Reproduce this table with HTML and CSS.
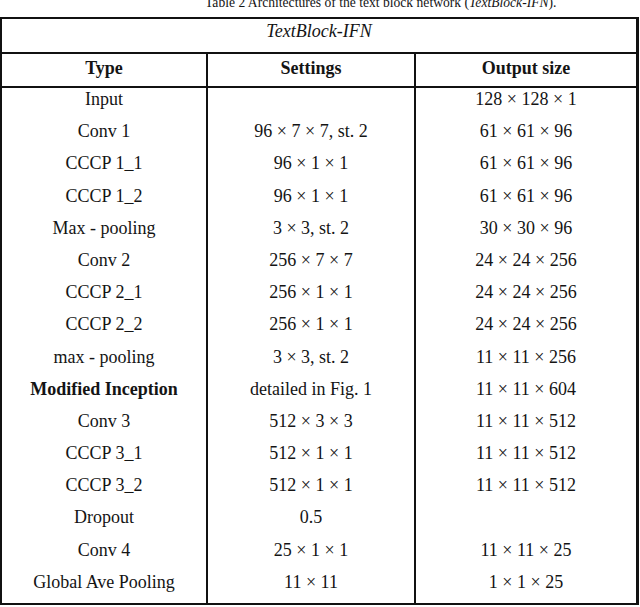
FILE: index.html
```html
<!DOCTYPE html>
<html lang="en">
<head>
<meta charset="utf-8">
<title>TextBlock-IFN</title>
<link rel="stylesheet" href="styles.css">
</head>
<body>
<div class="caption-clip">
  <p class="caption">Table 2 Architectures of the text block network (<i>TextBlock-IFN</i>).</p>
</div>
<table class="arch">
  <colgroup>
    <col class="c1"><col class="c2"><col class="c3">
  </colgroup>
  <thead>
    <tr class="title-row"><th colspan="3" class="title">TextBlock-IFN</th></tr>
    <tr class="head-row">
      <th>Type</th>
      <th class="div">Settings</th>
      <th class="div">Output size</th>
    </tr>
  </thead>
  <tbody>
    <tr><td>Input</td><td class="div"></td><td class="div">128 × 128 × 1</td></tr>
    <tr><td>Conv 1</td><td class="div">96 × 7 × 7, st. 2</td><td class="div">61 × 61 × 96</td></tr>
    <tr><td>CCCP 1_1</td><td class="div">96 × 1 × 1</td><td class="div">61 × 61 × 96</td></tr>
    <tr><td>CCCP 1_2</td><td class="div">96 × 1 × 1</td><td class="div">61 × 61 × 96</td></tr>
    <tr><td>Max - pooling</td><td class="div">3 × 3, st. 2</td><td class="div">30 × 30 × 96</td></tr>
    <tr><td>Conv 2</td><td class="div">256 × 7 × 7</td><td class="div">24 × 24 × 256</td></tr>
    <tr><td>CCCP 2_1</td><td class="div">256 × 1 × 1</td><td class="div">24 × 24 × 256</td></tr>
    <tr><td>CCCP 2_2</td><td class="div">256 × 1 × 1</td><td class="div">24 × 24 × 256</td></tr>
    <tr><td>max - pooling</td><td class="div">3 × 3, st. 2</td><td class="div">11 × 11 × 256</td></tr>
    <tr><td class="strong">Modified Inception</td><td class="div">detailed in Fig. 1</td><td class="div">11 × 11 × 604</td></tr>
    <tr><td>Conv 3</td><td class="div">512 × 3 × 3</td><td class="div">11 × 11 × 512</td></tr>
    <tr><td>CCCP 3_1</td><td class="div">512 × 1 × 1</td><td class="div">11 × 11 × 512</td></tr>
    <tr><td>CCCP 3_2</td><td class="div">512 × 1 × 1</td><td class="div">11 × 11 × 512</td></tr>
    <tr><td>Dropout</td><td class="div">0.5</td><td class="div"></td></tr>
    <tr><td>Conv 4</td><td class="div">25 × 1 × 1</td><td class="div">11 × 11 × 25</td></tr>
    <tr><td>Global Ave Pooling</td><td class="div">11 × 11</td><td class="div">1 × 1 × 25</td></tr>
  </tbody>
</table>
</body>
</html>
```
FILE: styles.css
```css
html, body {
  margin: 0;
  padding: 0;
  background: #ffffff;
}

body {
  font-family: "Liberation Serif", "Times New Roman", serif;
  color: #141414;
}

.caption-clip {
  height: 17px;
  overflow: hidden;
}

.caption {
  margin: -6px 0 0 0;
  padding-left: 205px;
  font-size: 13.6px;
  line-height: 18px;
  white-space: nowrap;
}

.arch {
  border-collapse: separate;
  border-spacing: 0;
  table-layout: fixed;
  width: 639px;
  border-top: 2px solid #111;
  border-left: 2px solid #111;
  border-right: 3px solid #111;
  border-bottom: 2px solid #111;
  font-size: 18px;
}

.c1 { width: 204px; }
.c2 { width: 208px; }
.c3 { width: 222px; }

.arch th,
.arch td {
  box-sizing: border-box;
  padding: 0;
  text-align: center;
  vertical-align: top;
  line-height: 22px;
  white-space: nowrap;
}

.arch .div {
  border-left: 2px solid #111;
}

.title-row th {
  height: 35px;
  border-bottom: 2px solid #111;
  font-weight: normal;
  font-style: italic;
  padding-top: 1px;
}

.head-row th {
  height: 34px;
  border-bottom: 2px solid #111;
  font-weight: bold;
  padding-top: 3px;
}

.arch tbody td {
  height: 32.1875px;
}

.strong {
  font-weight: bold;
}
```
